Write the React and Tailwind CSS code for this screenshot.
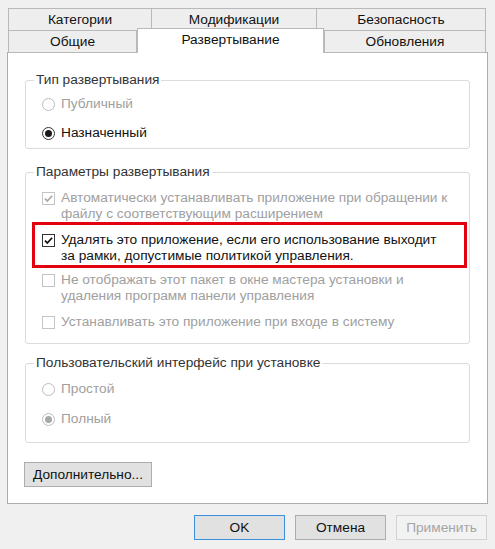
import React from "react";

function Radio({ checked, disabled, label }) {
  return (
    <div className="flex h-[20px] items-center">
      <span
        className={`ml-[16px] flex h-[13px] w-[13px] items-center justify-center rounded-full border bg-white ${
          disabled ? "border-[#bcbcbc]" : "border-[#333333]"
        }`}
      >
        {checked && (
          <span className={`h-[7px] w-[7px] rounded-full ${disabled ? "bg-[#a8a8a8]" : "bg-[#1a1a1a]"}`} />
        )}
      </span>
      <span className={`ml-[6px] ${disabled ? "text-[#a0a0a0]" : "text-[#111111]"}`}>{label}</span>
    </div>
  );
}

function Check({ checked, disabled, children }) {
  return (
    <div className="flex items-start">
      <span
        className={`mt-[2px] ml-[16px] flex h-[13px] w-[13px] shrink-0 items-center justify-center border bg-white ${
          disabled ? "border-[#c4c4c4]" : "border-[#333333]"
        }`}
      >
        {checked && (
          <svg viewBox="0 0 13 13" className="h-[13px] w-[13px]">
            <path
              d="M2.3 6.6 L5.1 9.4 L10.8 3.2"
              fill="none"
              stroke={disabled ? "#a8a8a8" : "#111111"}
              strokeWidth="2"
            />
          </svg>
        )}
      </span>
      <span className={`ml-[6px] whitespace-nowrap ${disabled ? "text-[#a0a0a0]" : "text-[#111111]"}`}>{children}</span>
    </div>
  );
}

function Group({ title, className, children }) {
  return (
    <fieldset className={`rounded-[3px] border border-[#dcdcdc] px-[8px] ${className}`}>
      <legend className="px-[2px] text-[#333333]">{title}</legend>
      <div className="-mx-[8px]">{children}</div>
    </fieldset>
  );
}

function Button({ children, primary, disabled, className }) {
  return (
    <div
      className={`flex h-[25px] items-center justify-center border ${
        disabled
          ? "border-[#d2d2d2] bg-[#f2f2f2] text-[#a6a6a6]"
          : primary
          ? "border-[#3c8fd9] bg-[#e1e1e1] text-[#111111]"
          : "border-[#adadad] bg-[#e1e1e1] text-[#111111]"
      } ${className}`}
    >
      {children}
    </div>
  );
}

export default function App() {
  const font = { fontFamily: '"Liberation Sans", Arial, sans-serif' };
  return (
    <div className="h-[549px] w-[495px] overflow-hidden bg-[#f0f0f0] pt-[8px] text-[13.7px] leading-[16px]" style={font}>
      {/* tabs, back row */}
      <div className="ml-[8px] flex h-[23px] w-[478px] text-[#111111]">
        <div className="flex w-[144px] items-center justify-center border border-[#b9b9b9] bg-[#eeeeee]">Категории</div>
        <div className="flex w-[165px] items-center justify-center border border-l-0 border-[#b9b9b9] bg-[#eeeeee]">Модификации</div>
        <div className="flex w-[169px] items-center justify-center border border-l-0 border-[#b9b9b9] bg-[#eeeeee]">Безопасность</div>
      </div>
      {/* tabs, front row */}
      <div className="relative z-10 ml-[8px] flex h-[22px] w-[478px] items-end text-[#111111]">
        <div className="flex h-[22px] w-[129px] items-center justify-center border border-t-0 border-[#b9b9b9] bg-[#eeeeee]">Общие</div>
        <div className="-mt-[2px] flex h-[25px] w-[187px] items-start justify-center border border-b-0 border-[#b9b9b9] bg-white pt-[3px]">
          Развертывание
        </div>
        <div className="flex h-[22px] w-[162px] items-center justify-center border border-t-0 border-[#b9b9b9] bg-[#eeeeee]">Обновления</div>
      </div>

      {/* page */}
      <div className="-mt-[1px] ml-[7px] h-[452px] w-[481px] border border-[#adadad] bg-white pl-[17px] pt-[19px]">
        <Group title="Тип развертывания" className="h-[77px] w-[445px]">
          <div className="mt-[6px]">
            <Radio disabled label="Публичный" />
          </div>
          <div className="mt-[9px]">
            <Radio checked label="Назначенный" />
          </div>
        </Group>

        <Group title="Параметры развертывания" className="mt-[15px] h-[180px] w-[445px]">
          <div className="mt-[10px]">
            <Check checked disabled>
              Автоматически устанавливать приложение при обращении к<br />
              файлу с соответствующим расширением
            </Check>
          </div>
          <div className="ml-[6px] h-[46px] w-[435px] border-[3px] border-[#e3000f] pt-[7px]">
            <div className="-ml-[9px]">
              <Check checked>
                Удалять это приложение, если его использование выходит<br />
                за рамки, допустимые политикой управления.
              </Check>
            </div>
          </div>
          <div className="mt-[4px]">
            <Check disabled>
              Не отображать этот пакет в окне мастера установки и<br />
              удаления программ панели управления
            </Check>
          </div>
          <div className="mt-[10px]">
            <Check disabled>Устанавливать это приложение при входе в систему</Check>
          </div>
        </Group>

        <Group title="Пользовательский интерфейс при установке" className="mt-[11px] h-[88px] w-[445px]">
          <div className="mt-[8px]">
            <Radio disabled label="Простой" />
          </div>
          <div className="mt-[10px]">
            <Radio checked disabled label="Полный" />
          </div>
        </Group>

        <Button className="mt-[19px] w-[128px] -ml-[1px]">Дополнительно...</Button>
      </div>

      {/* dialog buttons */}
      <div className="mt-[11px] flex justify-end gap-[12px] pr-[8px]">
        <Button primary className="w-[91px]">OK</Button>
        <Button className="w-[91px] -ml-[2px]">Отмена</Button>
        <Button disabled className="w-[91px] -ml-[2px]">Применить</Button>
      </div>
    </div>
  );
}
